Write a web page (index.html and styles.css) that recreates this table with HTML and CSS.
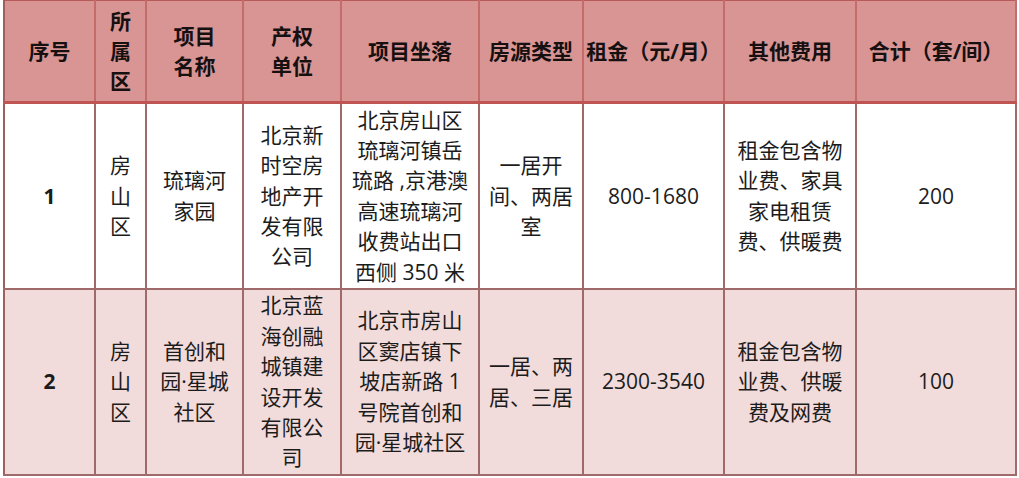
FILE: index.html
```html
<!DOCTYPE html>
<html lang="zh-CN">
<head>
<meta charset="utf-8">
<title>房源表</title>
<link rel="stylesheet" href="styles.css">
</head>
<body>
<table class="grid">
  <colgroup>
    <col class="c1"><col class="c2"><col class="c3"><col class="c4"><col class="c5">
    <col class="c6"><col class="c7"><col class="c8"><col class="c9">
  </colgroup>
  <thead>
    <tr class="head">
      <th>序号</th>
      <th>所<br>属<br>区</th>
      <th>项目<br>名称</th>
      <th>产权<br>单位</th>
      <th>项目坐落</th>
      <th>房源类型</th>
      <th>租金（元/月）</th>
      <th>其他费用</th>
      <th>合计（套/间）</th>
    </tr>
  </thead>
  <tbody>
    <tr class="row odd">
      <td class="num">1</td>
      <td>房<br>山<br>区</td>
      <td>琉璃河<br>家园</td>
      <td>北京新<br>时空房<br>地产开<br>发有限<br>公司</td>
      <td>北京房山区<br>琉璃河镇岳<br>琉路 ,京港澳<br>高速琉璃河<br>收费站出口<br>西侧 350 米</td>
      <td>一居开<br>间、两居<br>室</td>
      <td>800-1680</td>
      <td>租金包含物<br>业费、家具<br>家电租赁<br>费、供暖费</td>
      <td>200</td>
    </tr>
    <tr class="row even">
      <td class="num">2</td>
      <td>房<br>山<br>区</td>
      <td>首创和<br>园·星城<br>社区</td>
      <td>北京蓝<br>海创融<br>城镇建<br>设开发<br>有限公<br>司</td>
      <td>北京市房山<br>区窦店镇下<br>坡店新路 1<br>号院首创和<br>园·星城社区</td>
      <td>一居、两<br>居、三居</td>
      <td>2300-3540</td>
      <td>租金包含物<br>业费、供暖<br>费及网费</td>
      <td>100</td>
    </tr>
  </tbody>
</table>
</body>
</html>
```
FILE: styles.css
```css
html, body {
  margin: 0;
  padding: 0;
  background: #ffffff;
}
body {
  font-family: "Open Sans", "Noto Sans CJK SC", sans-serif;
  color: #1c1c1c;
}
.grid {
  margin-left: 3px;
  width: 1012px;
  table-layout: fixed;
  border-collapse: collapse;
}
.c1 { width: 91px; }
.c2 { width: 51px; }
.c3 { width: 97px; }
.c4 { width: 98px; }
.c5 { width: 138px; }
.c6 { width: 104px; }
.c7 { width: 141px; }
.c8 { width: 132px; }
.c9 { width: 160px; }

th, td {
  padding: 0;
  text-align: center;
  vertical-align: middle;
  white-space: nowrap;
  overflow: hidden;
}
.head {
  height: 102px;
  background: #d99594;
}
.head th {
  font-weight: 700;
  font-size: 21px;
  line-height: 30px;
  color: #161010;
  border-top: 1px solid #b85a5a;
  border-left: 2px solid #c46c6c;
  border-right: 2px solid #c46c6c;
  border-bottom: 3px solid #bf5552;
  letter-spacing: 0;
}
.row {
  height: 186px;
}
.row td {
  font-size: 21px;
  line-height: 30.4px;
  border: 2px solid #a06a6a;
}
.head th:first-child, .row td:first-child { border-left-color: #9c6060; }
.row.odd { background: #ffffff; }
.row.even { background: #f2dbdb; }
.row td.num {
  font-weight: 700;
}
```
